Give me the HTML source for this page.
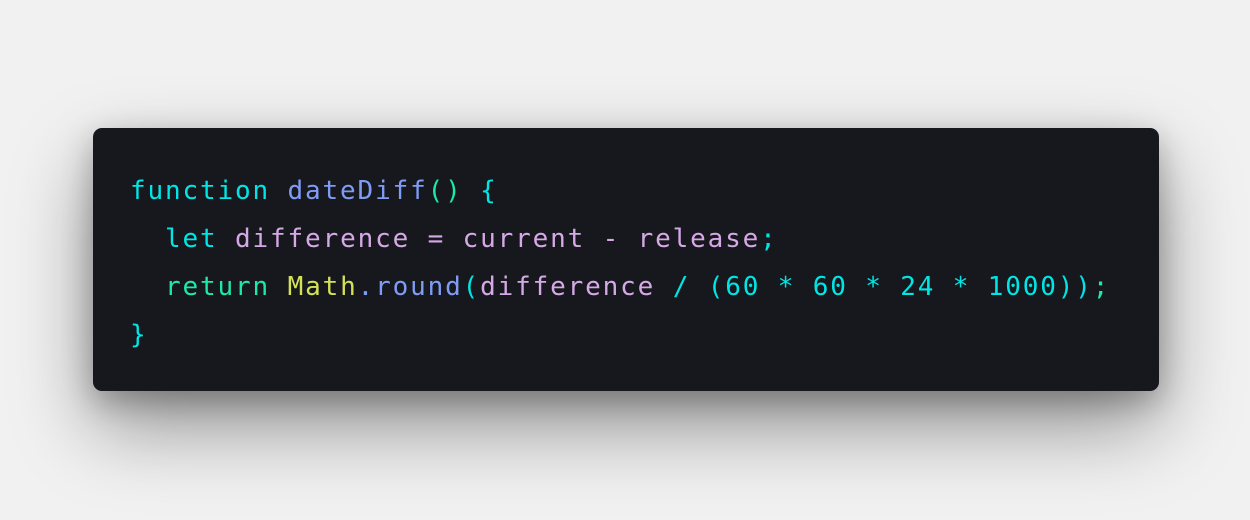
<!DOCTYPE html>
<html><head><style>
html,body{margin:0;padding:0;}
body{width:1250px;height:520px;background:#f1f1f1;position:relative;overflow:hidden;}
.card{position:absolute;left:93px;top:128px;width:1066px;height:263px;background:#17181d;border-radius:9px;box-shadow:0 35px 80px rgba(0,0,0,0.4),0 10px 30px rgba(0,0,0,0.25);}
pre{margin:0;position:absolute;left:37px;top:39px;font-family:"DejaVu Sans Mono","Liberation Mono",monospace;font-size:26px;letter-spacing:1.85px;line-height:48px;color:#00e5e5;}
.c{color:#00e5e5}.b{color:#7f9cf5}.g{color:#1de9a8}.p{color:#d5a8e6}.y{color:#d4e157}
</style></head><body>
<div class="card"><pre><span class="c">function</span> <span class="b">dateDiff</span><span class="g">()</span> <span class="c">{</span>
  <span class="c">let</span> <span class="p">difference = current - release</span><span class="c">;</span>
  <span class="g">return</span> <span class="y">Math</span><span class="b">.round</span><span class="c">(</span><span class="p">difference</span> <span class="c">/ (60 * 60 * 24 * 1000))</span><span class="g">;</span>
<span class="c">}</span></pre></div>
</body></html>
